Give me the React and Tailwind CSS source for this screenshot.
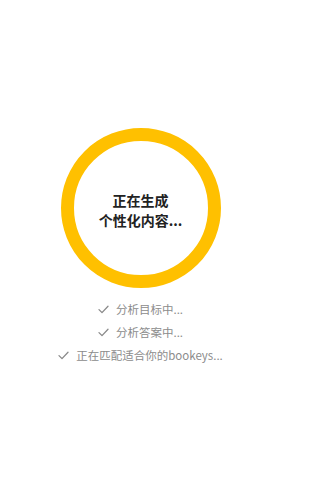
import React from "react";

function Check() {
  return (
    <svg width="11" height="9" viewBox="0 0 11 9" fill="none" className="shrink-0">
      <path d="M1 4.6 L4 7.6 L10 1.2" stroke="#8a8a8a" strokeWidth="1.3" strokeLinecap="round" strokeLinejoin="round" />
    </svg>
  );
}

export default function App() {
  const items = ["分析目标中...", "分析答案中...", "正在匹配适合你的bookeys..."];
  return (
    <div
      className="w-[281px] h-[500px] bg-white flex flex-col items-center"
      style={{ fontFamily: '"Noto Sans CJK SC", "Noto Sans", sans-serif' }}
    >
      <div className="mt-[128px] w-[160px] h-[160px] rounded-full border-[13px] border-[#ffc000] flex flex-col items-center justify-center">
        <div className="text-[14px] font-bold leading-[20px] text-[#222222] text-center mt-[4px]">
          <div>正在生成</div>
          <div>个性化内容...</div>
        </div>
      </div>
      <div className="mt-[13px] flex flex-col items-center gap-[6px]">
        {items.map((t) => (
          <div key={t} className="flex items-center gap-[7px] h-[17px] text-[11.5px] text-[#8c8c8c]">
            <Check />
            <span>{t}</span>
          </div>
        ))}
      </div>
    </div>
  );
}
